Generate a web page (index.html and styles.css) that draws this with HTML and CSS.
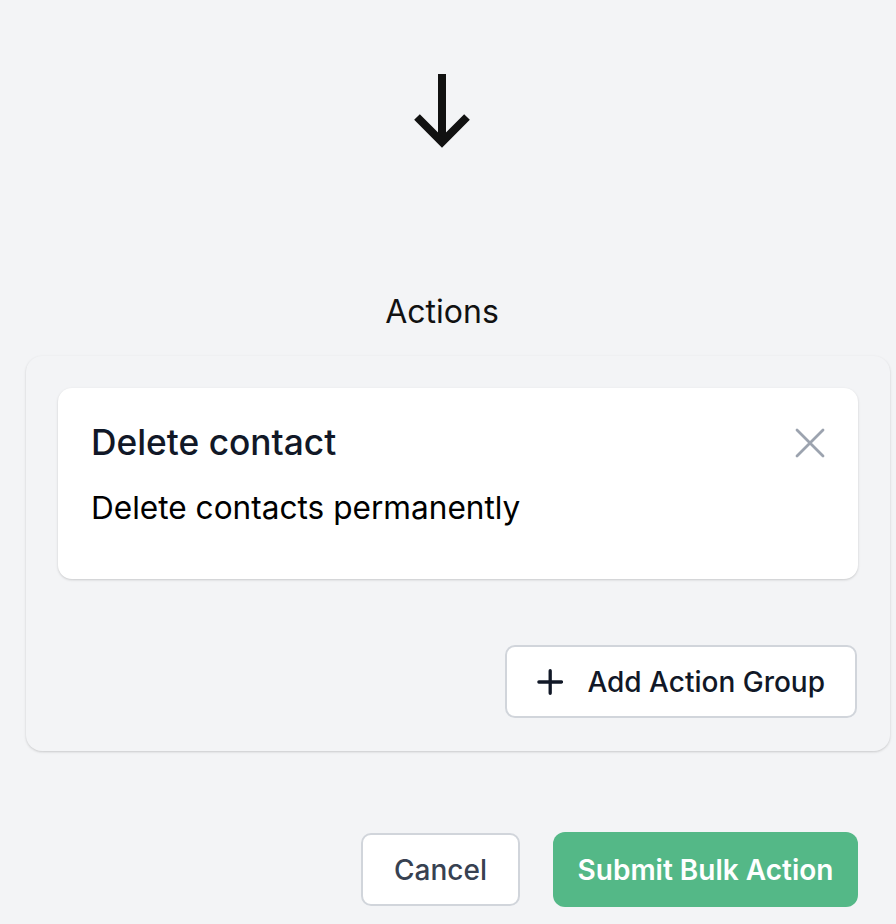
FILE: index.html
```html
<!DOCTYPE html>
<html lang="en">
<head>
<meta charset="utf-8">
<title>Bulk Action</title>
<link rel="stylesheet" href="styles.css">
</head>
<body>
<div class="page">
  <div class="arrow-wrap">
    <svg class="arrow" width="56" height="74" viewBox="0 0 56 74" fill="none" stroke="#111111" stroke-width="8">
      <path d="M28 0 V67" />
      <path d="M3 43 L28 68 L53 43" stroke-linejoin="miter" />
    </svg>
  </div>
  <div class="section-label">Actions</div>
  <div class="panel">
    <div class="action-card">
      <div class="card-head">
        <div class="card-title">Delete contact</div>
        <button class="close-btn" aria-label="Remove">
          <svg width="30" height="30" viewBox="0 0 30 30" fill="none" stroke="#9ca3af" stroke-width="2.8" stroke-linecap="round">
            <path d="M2 2 L28 28 M28 2 L2 28" />
          </svg>
        </button>
      </div>
      <div class="card-desc">Delete contacts permanently</div>
    </div>
    <div class="panel-actions">
      <button class="btn btn-outline add-btn">
        <svg width="28" height="28" viewBox="0 0 28 28" fill="none" stroke="#111827" stroke-width="3.5" stroke-linecap="round">
          <path d="M14 2 V26 M2 14 H26" />
        </svg>
        <span>Add Action Group</span>
      </button>
    </div>
  </div>
  <div class="footer">
    <button class="btn btn-outline cancel-btn">Cancel</button>
    <button class="btn btn-primary">Submit Bulk Action</button>
  </div>
</div>
</body>
</html>
```
FILE: styles.css
```css
* { box-sizing: border-box; }
html, body { margin: 0; padding: 0; }
body {
  background: #f3f4f6;
  font-family: Inter, "Noto Sans", sans-serif;
  color: #111827;
}
.page {
  width: 896px;
  padding: 74px 6px 0 26px;
}
.arrow-wrap {
  display: flex;
  justify-content: center;
  margin-left: -26px;
  width: 884px;
}
.arrow { display: block; }
.section-label {
  margin-left: -26px;
  width: 884px;
  text-align: center;
  font-size: 32px;
  line-height: 40px;
  color: #111111;
  margin-top: 144px;
}
.panel {
  margin-top: 24px;
  background: #f3f4f6;
  border-radius: 16px;
  box-shadow: 0 1px 3px rgba(0,0,0,0.12), 0 1px 2px rgba(0,0,0,0.06);
  padding: 32px 32px 33px 32px;
}
.action-card {
  background: #ffffff;
  border-radius: 14px;
  box-shadow: 0 1px 3px rgba(0,0,0,0.12), 0 1px 2px rgba(0,0,0,0.06);
  padding: 35px 33px 0 33px;
  height: 191px;
}
.card-head {
  display: flex;
  justify-content: space-between;
  align-items: center;
  height: 40px;
}
.card-title {
  font-size: 35.3px;
  line-height: 40px;
  font-weight: 500;
  color: #111827;
}
.close-btn {
  border: 0;
  background: none;
  padding: 0;
  margin-right: 0;
  display: flex;
}
.card-desc {
  margin-top: 25px;
  font-size: 31.6px;
  line-height: 40px;
  color: #000000;
}
.panel-actions {
  display: flex;
  justify-content: flex-end;
  margin-top: 66px;
}
.btn {
  font-family: Inter, "Noto Sans", sans-serif;
  font-size: 28px;
  border-radius: 10px;
  cursor: pointer;
  white-space: nowrap;
}
.btn-outline {
  background: #ffffff;
  border: 2px solid #d1d5db;
  color: #111827;
  font-weight: 500;
}
.add-btn {
  display: flex;
  align-items: center;
  gap: 24px;
  height: 73px;
  width: 352px;
  padding: 0 30px;
  margin-right: 1px;
}
.footer {
  display: flex;
  justify-content: flex-end;
  gap: 33px;
  margin-top: 81px;
  padding-right: 32px;
  align-items: center;
}
.cancel-btn {
  width: 159px;
  height: 73px;
  color: #374151;
}
.btn-primary {
  width: 305px;
  height: 75px;
  background: #54b887;
  border: 0;
  color: #ffffff;
  font-weight: 600;
  border-radius: 12px;
}
```
